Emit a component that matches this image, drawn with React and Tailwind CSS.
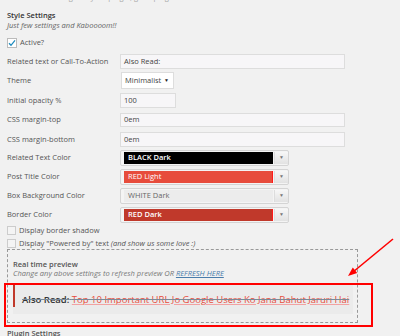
import React from "react";

const label = "w-[113px] shrink-0 text-[7.5px] text-[#555]";

const ColorSelect = ({ name, value, box, text }) => (
  <div className="mt-[3px] flex items-center">
    <div className={label}>{name}</div>
    <div className="flex h-[16px] w-[169px] items-stretch rounded-[2px] border border-[#d4d4d4] bg-[#f4f4f4] pl-[3px] py-[1px]">
      <div className={`flex flex-1 items-center pl-[4px] text-[7.5px] ${box} ${text}`}>{value}</div>
      <div className="ml-[1px] flex w-[14px] items-center justify-center border-l border-[#ddd] bg-gradient-to-b from-[#f7f7f7] to-[#e2e2e2] text-[5px] text-[#777]">▼</div>
    </div>
  </div>
);

export default function App() {
  return (
    <div className="relative h-[336px] w-[400px] overflow-hidden bg-[#f1f1f1] pl-[7px] font-['Open_Sans','Noto_Sans',sans-serif] text-[#555]">
      {/* cut-off line at top */}
      <div className="h-[10px] -mt-[8px] pl-[33px] text-[7.5px] leading-[10px] text-[#aaa]">nt settings for your plugin, go to plugin</div>

      <div className="mt-[8px] h-[10px] text-[7.5px] font-semibold leading-[10px] text-[#333]">Style Settings</div>
      <div className="h-[10px] text-[7.5px] italic leading-[10px] text-[#666]">Just few settings and Kaboooom!!</div>

      {/* Active */}
      <div className="mt-[8px] flex h-[10px] items-center gap-[3px]">
        <div className="flex h-[10px] w-[10px] items-center justify-center border border-[#bbb] bg-white">
          <svg width="8" height="8" viewBox="0 0 8 8">
            <path d="M1 4.2 L3 6.3 L7 1.3" fill="none" stroke="#1e8cbe" strokeWidth="1.3" />
          </svg>
        </div>
        <span className="text-[7.5px]">Active?</span>
      </div>

      <div className="mt-[6px] flex items-center">
        <div className={label}>Related text or Call-To-Action</div>
        <div className="flex h-[15px] w-[225px] items-center border border-[#ddd] bg-[#f7f6f8] pl-[3px] text-[7.5px] text-[#444]">Also Read:</div>
      </div>

      <div className="mt-[3px] flex items-center">
        <div className={label}>Theme</div>
        <div className="ml-[1px] flex h-[17px] w-[53px] items-center justify-between border border-[#ddd] bg-white pl-[3px] pr-[4px] text-[7.5px] text-[#444]">
          <span>Minimalist</span>
          <span className="text-[5px] text-[#222]">▼</span>
        </div>
      </div>

      <div className="mt-[4px] flex items-center">
        <div className={label}>Initial opacity %</div>
        <div className="flex h-[15px] w-[56px] items-center border border-[#ddd] bg-[#f7f6f8] pl-[3px] text-[7.5px] text-[#444]">100</div>
      </div>

      <div className="mt-[5px] flex items-center">
        <div className={label}>CSS margin-top</div>
        <div className="flex h-[14px] w-[225px] items-center border border-[#ddd] bg-[#f7f6f8] pl-[3px] text-[7.5px] text-[#444]">0em</div>
      </div>

      <div className="mt-[5px] flex items-center">
        <div className={label}>CSS margin-bottom</div>
        <div className="flex h-[15px] w-[225px] items-center border border-[#ddd] bg-[#f7f6f8] pl-[3px] text-[7.5px] text-[#444]">0em</div>
      </div>

      <ColorSelect name="Related Text Color" value="BLACK Dark" box="bg-black" text="text-white font-semibold" />
      <ColorSelect name="Post Title Color" value="RED Light" box="bg-[#e74c3c] border-r border-[#ff1a1a]" text="text-white" />
      <ColorSelect name="Box Background Color" value="WHITE Dark" box="bg-[#ececec]" text="text-[#666]" />
      <ColorSelect name="Border Color" value="RED Dark" box="bg-[#c0392b] border-r border-[#ff1a1a]" text="text-white font-semibold" />

      <div className="mt-[3px] flex h-[9px] items-center gap-[3px]">
        <div className="h-[9px] w-[9px] border border-[#ccc] bg-[#f4f4f4]" />
        <span className="text-[7.5px]">Display border shadow</span>
      </div>
      <div className="mt-[4px] flex h-[9px] items-center gap-[3px]">
        <div className="h-[9px] w-[9px] border border-[#ccc] bg-[#f4f4f4]" />
        <span className="text-[7.5px]">
          Display "Powered by" text <i>(and show us some love :)</i>
        </span>
      </div>

      {/* preview box */}
      <div className="mt-[1px] h-[74px] w-[351px] border border-dashed border-[#999] px-[5px] pt-[9px]">
        <div className="h-[10px] text-[7.5px] font-semibold leading-[10px] text-[#555]">Real time preview</div>
        <div className="h-[9px] text-[7.5px] italic leading-[9px] text-[#777]">
          Change any above settings to refresh preview OR <span className="text-[#4a7dab] underline">REFRESH HERE</span>
        </div>
        <div className="mt-[7px] flex h-[29px] w-[340px] items-start bg-[#ebebeb]">
          <div className="h-[22px] w-[2px] bg-[#c0392b]" />
          <div className="pl-[7px] pt-[9px] text-[9.5px] leading-[12px] text-[#333] line-through decoration-[#7a8a99]">
            <span className="font-semibold">Also Read:</span>{" "}
            <span className="text-[#e74c3c] underline decoration-[#f2a2a2]">Top 10 Important URL Jo Google Users Ko Jana Bahut Jaruri Hai</span>
          </div>
        </div>
      </div>

      <div className="mt-[5px] text-[7.5px] font-semibold leading-[10px] text-[#555]">Plugin Settings</div>

      {/* annotation overlay */}
      <div className="absolute left-[4px] top-[283px] h-[44px] w-[369px] border-2 border-[#ff0000]" />
      <svg className="absolute left-0 top-0" width="400" height="336" viewBox="0 0 400 336">
        <line x1="393" y1="239" x2="353" y2="272" stroke="#ff0000" strokeWidth="1.6" />
        <polygon points="348,276 357.2,273 352.8,267.6" fill="#ff0000" />
      </svg>
    </div>
  );
}
